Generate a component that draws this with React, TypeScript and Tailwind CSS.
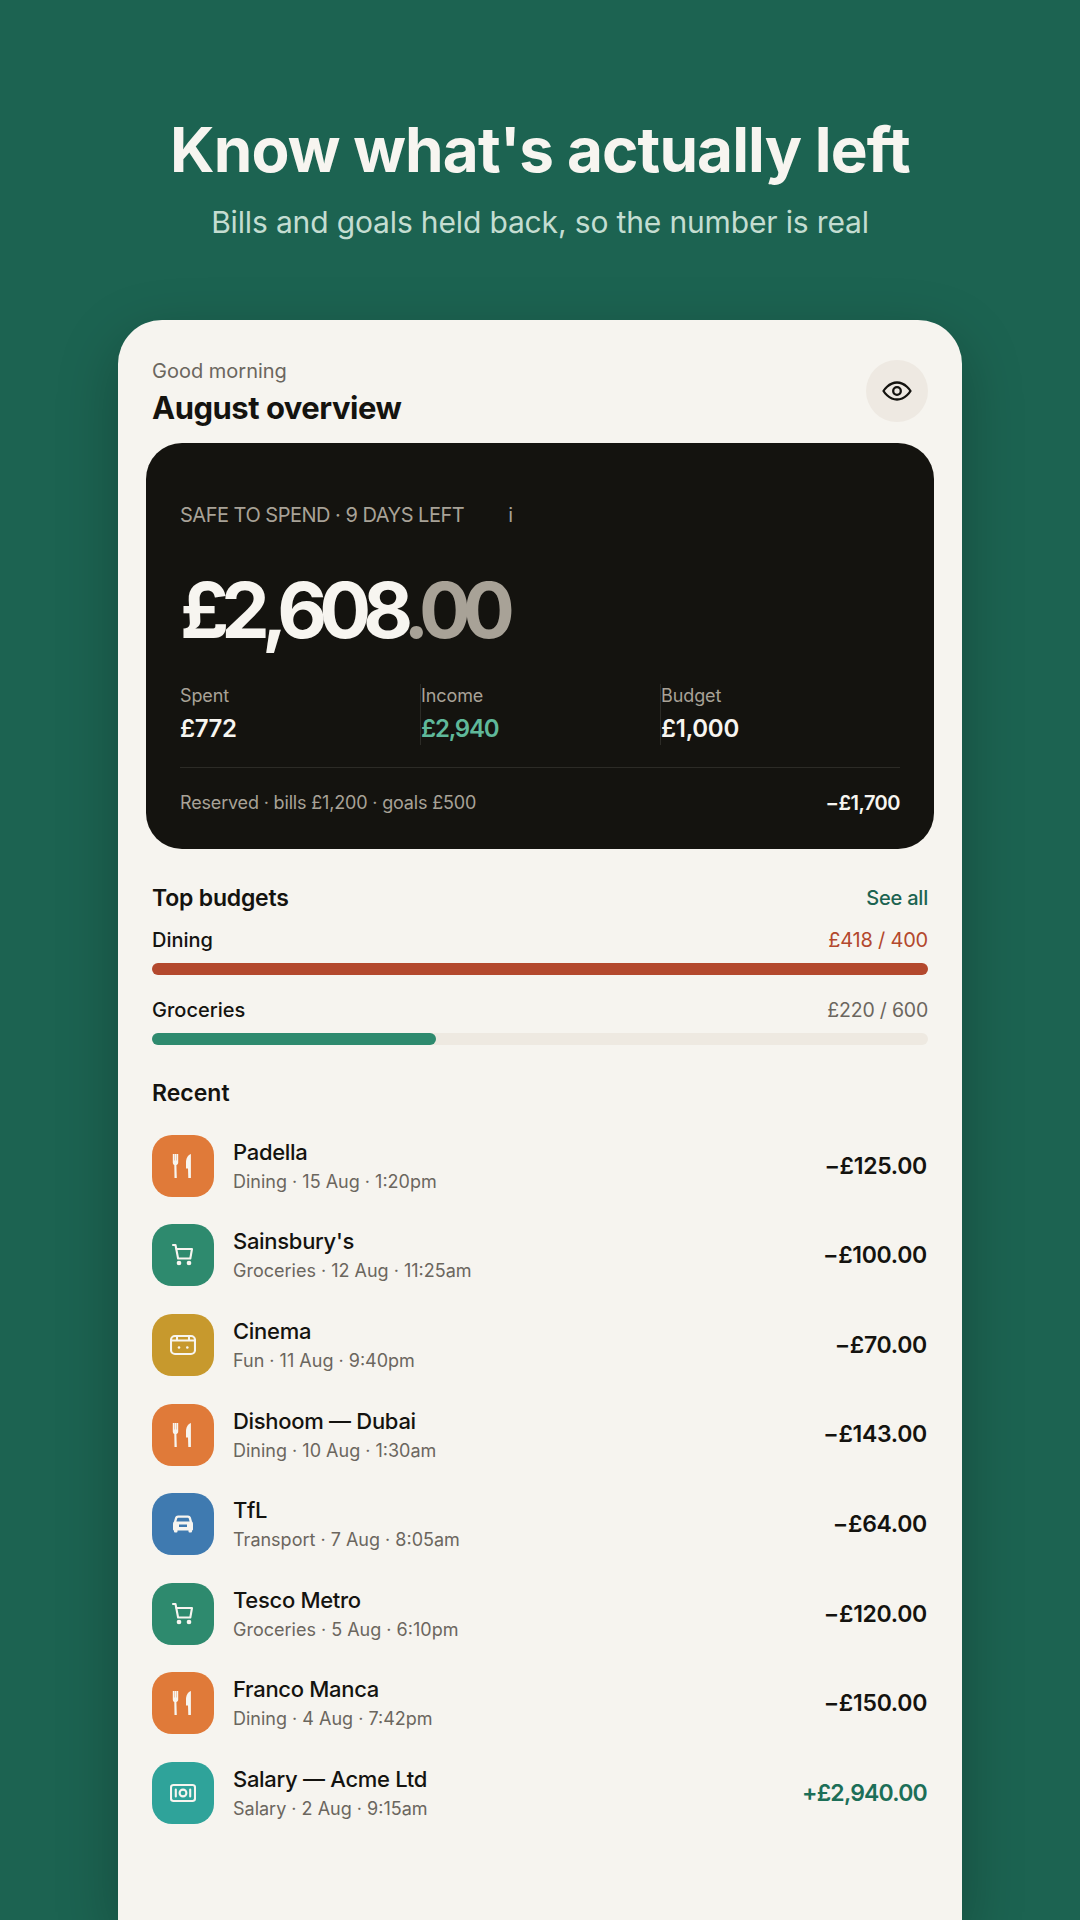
import React from "react";

const font = { fontFamily: '"Inter", "Liberation Sans", sans-serif' };

function Fork() {
  return (
    <svg width="26" height="26" viewBox="0 0 26 26" fill="#f7f5f0">
      <path d="M2.800 1h1.600v6.500h.35V1h1.500v6.500h.35V1h1.600v8.500c0 1.300-.7 2.100-1.800 2.600L6.800 25H4.500l-.2-12.900C3.400 11.600 2.800 10.700 2.800 9.500z" />
      <path d="M20.900 1v24h-2.600l-.3-9.500H16V9.500C16 5.500 17.800 2 20.900 1z" />
    </svg>
  );
}
function Cart() {
  return (
    <svg width="26" height="26" viewBox="0 0 26 26" fill="none" stroke="#f7f5f0" strokeWidth="2.100" strokeLinecap="round" strokeLinejoin="round">
      <path d="M3 3h2.500l2.600 13.500h12.200L22 7H6" />
      <circle cx="9" cy="21" r="1.300" fill="#f7f5f0" />
      <circle cx="19" cy="21" r="1.300" fill="#f7f5f0" />
    </svg>
  );
}
function Ticket() {
  return (
    <svg width="26" height="26" viewBox="0 0 26 26" fill="none" stroke="#f7f5f0" strokeWidth="2.100">
      <rect x="1" y="4" width="24" height="18" rx="4" />
      <path d="M1 8.500h24M7 4v4.500M19 4v4.500" />
      <circle cx="9" cy="15.500" r="1.300" fill="#f7f5f0" stroke="none" />
      <circle cx="17.300" cy="15.500" r="1.300" fill="#f7f5f0" stroke="none" />
    </svg>
  );
}
function Car() {
  return (
    <svg width="26" height="26" viewBox="0 0 26 26" fill="#f7f5f0">
      <path
        fillRule="evenodd"
        d="M8 4.500h10c1.400 0 2.400.8 2.900 2.100L22 10.500c.7.6 1 1.400 1 2.300V18.500a1 1 0 0 1-1 1v1a1 1 0 0 1-1 1h-1.500a1 1 0 0 1-1-1v-1h-11v1a1 1 0 0 1-1 1H5a1 1 0 0 1-1-1v-1a1 1 0 0 1-1-1v-5.700c0-.9.300-1.700 1-2.300l1.100-3.900C5.600 5.300 6.600 4.500 8 4.500zM8.200 6.700c-.5 0-.8.300-1 .8l-.8 3h13.200l-.8-3c-.2-.5-.5-.8-1-.8zM9 13.500v2.500h8v-2.500z"
      />
    </svg>
  );
}
function Cash() {
  return (
    <svg width="26" height="26" viewBox="0 0 26 26" fill="none" stroke="#f7f5f0" strokeWidth="2.100">
      <rect x="1" y="5" width="24" height="16" rx="2.500" />
      <circle cx="13" cy="13" r="3.400" />
      <path d="M5.800 9.500v7M20.200 9.500v7" strokeLinecap="round" />
    </svg>
  );
}

const icons = {
  dining: { bg: "bg-[#e07a39]", el: <Fork /> },
  groceries: { bg: "bg-[#2e8a6e]", el: <Cart /> },
  fun: { bg: "bg-[#c7992d]", el: <Ticket /> },
  transport: { bg: "bg-[#3f7ab0]", el: <Car /> },
  salary: { bg: "bg-[#2fa39a]", el: <Cash /> },
};

const rows: { name: string; sub: string; amt: string; icon: keyof typeof icons; pos?: boolean }[] = [
  { name: "Padella", sub: "Dining · 15 Aug · 1:20pm", amt: "−£125.00", icon: "dining" },
  { name: "Sainsbury's", sub: "Groceries · 12 Aug · 11:25am", amt: "−£100.00", icon: "groceries" },
  { name: "Cinema", sub: "Fun · 11 Aug · 9:40pm", amt: "−£70.00", icon: "fun" },
  { name: "Dishoom — Dubai", sub: "Dining · 10 Aug · 1:30am", amt: "−£143.00", icon: "dining" },
  { name: "TfL", sub: "Transport · 7 Aug · 8:05am", amt: "−£64.00", icon: "transport" },
  { name: "Tesco Metro", sub: "Groceries · 5 Aug · 6:10pm", amt: "−£120.00", icon: "groceries" },
  { name: "Franco Manca", sub: "Dining · 4 Aug · 7:42pm", amt: "−£150.00", icon: "dining" },
  { name: "Salary — Acme Ltd", sub: "Salary · 2 Aug · 9:15am", amt: "+£2,940.00", icon: "salary", pos: true },
];

export default function App() {
  return (
    <div style={font} className="w-[1080px] h-[1920px] overflow-hidden bg-[#1c6351] flex flex-col items-center">
      <h1 className="mt-[112px] text-[62px] leading-[76px] font-bold text-[#f7f5f0] tracking-[-0.9px]">Know what's actually left</h1>
      <p className="mt-[14px] text-[30px] leading-[40px] text-[#c4ddd1] tracking-[-0.15px]">Bills and goals held back, so the number is real</p>

      <div className="mt-[78px] w-[844px] flex-1 bg-[#f6f4ef] rounded-t-[44px] shadow-[0_20px_60px_rgba(0,0,0,0.25)] flex flex-col">
        <div className="flex items-center justify-between px-[34px] pt-[22px] h-[123px]">
          <div>
            <div className="text-[20px] leading-[28px] text-[#6b665e]">Good morning</div>
            <div className="mt-[3px] text-[31px] leading-[40px] font-bold text-[#14130f] tracking-[-0.5px]">August overview</div>
          </div>
          <div className="w-[62px] h-[62px] mb-[3px] rounded-full bg-[#eee9e2] flex items-center justify-center">
            <svg width="30" height="30" viewBox="0 0 30 30" fill="none" stroke="#14130f" strokeWidth="2.300" strokeLinecap="round" strokeLinejoin="round">
              <path d="M1.500 15S6.500 6.500 15 6.500 28.500 15 28.500 15 23.500 23.500 15 23.500 1.500 15 1.500 15z" />
              <circle cx="15" cy="15" r="3.800" />
            </svg>
          </div>
        </div>

        <div className="mx-[28px] h-[406px] rounded-[36px] bg-[#14130f] px-[34px] pt-[58px]">
          <div className="flex items-center text-[20px] leading-[28px] text-[#a8a297] uppercase tracking-[-0.5px]">
            <span>Safe to spend · 9 days left</span>
            <span className="ml-[44px] normal-case">i</span>
          </div>
          <div className="mt-[36px] text-[77px] leading-[90px] font-bold tracking-[-8px] text-[#f7f5f0]">
            £2,608<span className="text-[#a8a297]">.00</span>
          </div>
          <div className="mt-[29px] grid grid-cols-3 h-[59px]">
            <div>
              <div className="text-[18px] leading-[24px] text-[#a8a297] tracking-[-0.1px]">Spent</div>
              <div className="mt-[5px] text-[24px] leading-[32px] font-semibold text-[#f7f5f0] tracking-[-0.4px]">£772</div>
            </div>
            <div className="border-l border-[#2c2b26]">
              <div className="text-[18px] leading-[24px] text-[#a8a297] tracking-[-0.1px]">Income</div>
              <div className="mt-[5px] text-[24px] leading-[32px] font-semibold text-[#5fb89a] tracking-[-1.200px]">£2,940</div>
            </div>
            <div className="border-l border-[#2c2b26]">
              <div className="text-[18px] leading-[24px] text-[#a8a297] tracking-[-0.1px]">Budget</div>
              <div className="mt-[5px] text-[24px] leading-[32px] font-semibold text-[#f7f5f0] tracking-[-0.3px]">£1,000</div>
            </div>
          </div>
          <div className="mt-[24px] h-px bg-[#2c2b26]" />
          <div className="mt-[22px] flex items-center justify-between">
            <span className="text-[18px] leading-[26px] text-[#a8a297] tracking-[-0.17px]">Reserved · bills £1,200 · goals £500</span>
            <span className="text-[20px] leading-[26px] font-semibold text-[#f7f5f0] tracking-[-0.5px]">−£1,700</span>
          </div>
        </div>

        <div className="px-[34px]">
          <div className="mt-[33px] flex items-center justify-between">
            <span className="text-[23px] leading-[32px] font-semibold text-[#14130f] tracking-[-0.2px]">Top budgets</span>
            <span className="text-[20px] leading-[32px] font-medium text-[#1c6351] tracking-[-0.2px]">See all</span>
          </div>
          <div className="mt-[12px] flex items-center justify-between">
            <span className="text-[20px] leading-[28px] font-medium text-[#14130f]">Dining</span>
            <span className="text-[20px] leading-[28px] text-[#b3482d] tracking-[-0.2px]">£418 / 400</span>
          </div>
          <div className="mt-[9px] h-[12px] rounded-full bg-[#b3482d]" />
          <div className="mt-[21px] flex items-center justify-between">
            <span className="text-[20px] leading-[28px] font-medium text-[#14130f]">Groceries</span>
            <span className="text-[19.5px] leading-[28px] text-[#6b665e] tracking-[-0.2px]">£220 / 600</span>
          </div>
          <div className="mt-[9px] h-[12px] rounded-full bg-[#eee9e1]">
            <div className="h-full w-[284px] rounded-full bg-[#2e8a6e]" />
          </div>
          <div className="mt-[32px] text-[23px] leading-[32px] font-semibold text-[#14130f]">Recent</div>
          <div className="mt-[12px] flex flex-col">
            {rows.map((r) => (
              <div key={r.name} className="h-[89.6px] flex items-center">
                <div className={`w-[62px] h-[62px] rounded-[20px] flex items-center justify-center ${icons[r.icon].bg}`}>
                  {icons[r.icon].el}
                </div>
                <div className="ml-[19px] flex-1">
                  <div className="text-[22px] leading-[30px] font-medium text-[#14130f] tracking-[-0.3px]">{r.name}</div>
                  <div className="mt-[2px] text-[18px] leading-[26px] text-[#6b665e]">{r.sub}</div>
                </div>
                <div className={`mr-[1px] text-[23px] font-semibold ${r.pos ? "text-[#1c6f58] tracking-[-0.8px]" : "text-[#14130f] tracking-[-0.3px]"}`}>{r.amt}</div>
              </div>
            ))}
          </div>
        </div>
      </div>
    </div>
  );
}
